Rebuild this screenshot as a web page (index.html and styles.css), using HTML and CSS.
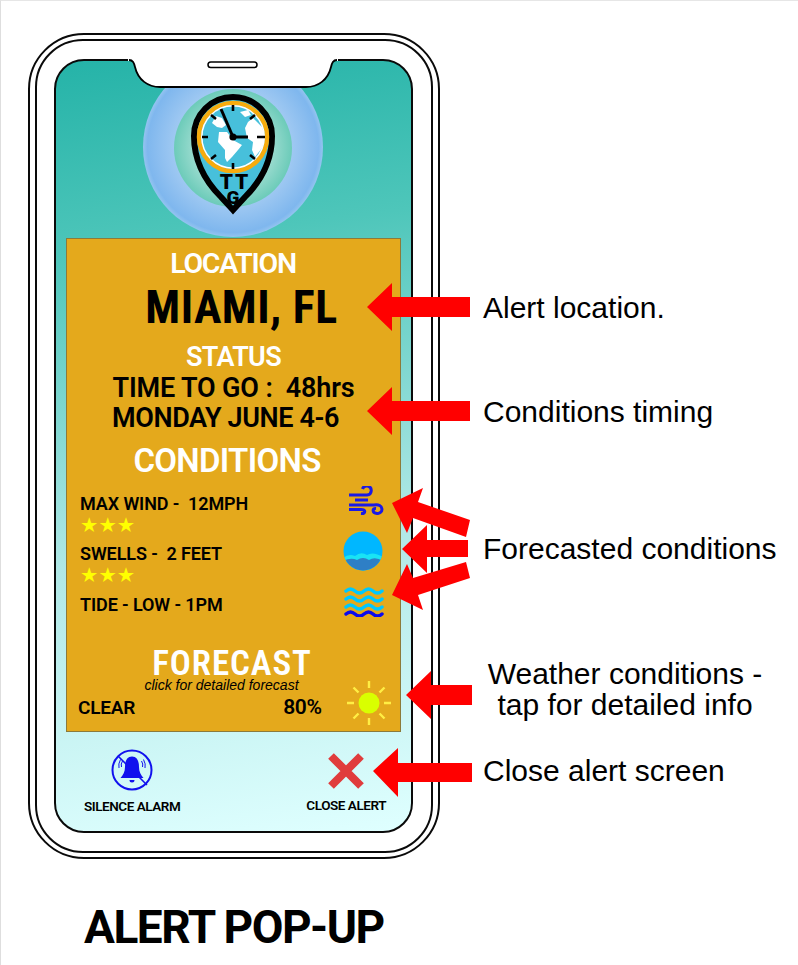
FILE: index.html
```html
<!DOCTYPE html>
<html lang="en">
<head>
<meta charset="utf-8">
<title>Alert pop-up</title>
<link rel="stylesheet" href="styles.css">
</head>
<body>
<main class="page">
  <div class="phone">
    <div class="phone-inner">
      <div class="screen">
        <svg class="logo" viewBox="143 57 180 180" width="180" height="180" aria-hidden="true">
          <defs>
            <radialGradient id="halo"><stop offset="0" stop-color="#e4eefa"/><stop offset="0.95" stop-color="#7fb7ee"/><stop offset="1" stop-color="#94c4f0"/></radialGradient>
            <radialGradient id="core"><stop offset="0" stop-color="#f4fbf9"/><stop offset="1" stop-color="#6ccbb9"/></radialGradient>
          </defs>
          <circle cx="233" cy="147" r="90" fill="url(#halo)"/>
          <circle cx="233" cy="148" r="59" fill="url(#core)"/>
          <path d="M233,210 L221,197 C206,182 194,162 194,136 A39,39 0 0 1 272,136 C272,162 260,182 245,197 Z" fill="#47c0db" stroke="#000" stroke-width="6"/>
          <circle cx="233" cy="137" r="34" fill="#47c0db" stroke="#f7ab0d" stroke-width="4.500"/>
          <circle cx="233" cy="137" r="31.200" fill="none" stroke="#fff" stroke-width="1.500"/>
          <g fill="#fff">
            <path d="M219,132 L227,132 L233,140 L242,145 L238,150 L232,157 L227,162 L225,158 L225,150 L218,142 Z"/>
            <path d="M212,123 L217,127 L222,128 L226,125 L222,118 L216,116 Z"/>
            <path d="M245,128 L248,122 L253,118 L262,127 L265,137 L262,148 L255,157 L252,150 L253,142 L247,138 Z"/>
            <path d="M240,112 L248,110 L251,115 L245,117 Z"/>
          </g>
          <path d="M233,105 V111 M233,163 V169 M202,137 H208 M257,137 H265 M211,115 L216,119 M255,115 L250,119 M211,159 L216,155 M255,159 L250,155" stroke="#000" stroke-width="2.600" fill="none"/>
          <path d="M233,137 L221,109" stroke="#000" stroke-width="3"/>
          <path d="M233,137 H248" stroke="#000" stroke-width="3"/>
          <circle cx="233" cy="137" r="3.600"/>
          <text class="logo-tt" x="235" y="188.500" text-anchor="middle">TT</text>
          <text class="logo-g" x="233" y="203.500" text-anchor="middle">G</text>
        </svg>

        <section class="card">
          <h2 class="label label-location">LOCATION</h2>
          <p class="city">MIAMI, FL</p>
          <h2 class="label label-status">STATUS</h2>
          <p class="timing timing-a">TIME TO GO :&nbsp; 48hrs</p>
          <p class="timing timing-b">MONDAY JUNE 4-6</p>
          <h2 class="label label-conditions">CONDITIONS</h2>

          <div class="cond cond-wind">
            <div>
              <div class="cond-text">MAX WIND -&nbsp; 12MPH</div>
              <div class="stars">★★★</div>
            </div>
            <svg class="icon-wind" viewBox="0 0 37 29" width="37" height="29" aria-hidden="true">
              <g fill="none" stroke="#1a1ae6" stroke-width="3">
                <path d="M2,9 H20 A4.500,4.500 0 1 0 15.500,3"/>
                <path d="M8,14 H21"/>
                <path d="M2,19 H27 C37,17 37,28 30,27.500 C25,27 25,22 29,22.500"/>
                <path d="M2,23.500 H14 C19,23.500 19,28 14,27.500"/>
              </g>
            </svg>
          </div>
          <div class="cond cond-swell">
            <div>
              <div class="cond-text">SWELLS -&nbsp; 2 FEET</div>
              <div class="stars">★★★</div>
            </div>
            <svg class="icon-ball" viewBox="0 0 40 40" width="40" height="40" aria-hidden="true">
              <clipPath id="ball"><circle cx="20" cy="20" r="19.500"/></clipPath>
              <g clip-path="url(#ball)">
                <rect width="40" height="40" fill="#00b7ff"/>
                <path d="M0,27 Q6,22 12,25 Q18,20 24,24 Q30,20 40,26 V40 H0 Z" fill="#19e3f5"/>
                <path d="M0,30 Q8,26 14,29 Q20,25 26,29 Q32,25 40,30 V40 H0 Z" fill="#2e7fc6"/>
              </g>
            </svg>
          </div>
          <div class="cond cond-tide">
            <div class="cond-text">TIDE - LOW - 1PM</div>
            <svg class="icon-waves" viewBox="0 0 40 30" width="40" height="30" aria-hidden="true">
              <g fill="none" stroke-width="3.400" stroke-linecap="round">
                <path stroke="#00c8ff" d="M2,4 q4.500,-4 9,0 t9,0 t9,0 t9,0"/>
                <path stroke="#00c8ff" d="M2,12 q4.500,-4 9,0 t9,0 t9,0 t9,0"/>
                <path stroke="#00c8ff" d="M2,20 q4.500,-4 9,0 t9,0 t9,0 t9,0"/>
                <path stroke="#0a0aee" d="M2,27 q4.500,-4 9,0 t9,0 t9,0 t9,0"/>
              </g>
            </svg>
          </div>

          <h2 class="label label-forecast">FORECAST</h2>
          <p class="hint">click for detailed forecast</p>
          <div class="summary">
            <span class="summary-text">CLEAR</span>
            <span class="summary-pct">80%</span>
            <svg class="icon-sun" viewBox="0 0 46 46" width="46" height="46" aria-hidden="true">
              <circle cx="23" cy="23" r="10.500" fill="#d9ff00"/>
              <path d="M23,1 V8 M23,38 V45 M1,23 H8 M38,23 H45 M7.500,7.500 L12.500,12.500 M38.500,7.500 L33.500,12.500 M7.500,38.500 L12.500,33.500 M38.500,38.500 L33.500,33.500" stroke="#ffee44" stroke-width="2.400"/>
            </svg>
          </div>
        </section>

        <div class="actions">
          <div class="action action-silence">
            <svg viewBox="0 0 42 42" width="42" height="42" aria-hidden="true">
              <circle cx="21" cy="21" r="19.500" fill="none" stroke="#1111ee" stroke-width="2"/>
              <path d="M21,7.500 C16,7.500 14,12 14,18 C14,23 12,26 9.500,29 H32.500 C30,26 28,23 28,18 C28,12 26,7.500 21,7.500 Z M18.500,31 A2.500,2.500 0 0 0 23.500,31 Z" fill="#1111ee"/>
              <path d="M7,7 L36,36" stroke="#1111ee" stroke-width="1.500"/>
              <path d="M10.500,18 Q9.500,15 11.500,12 M8,19 Q7,15 9.500,10.500 M31.500,18 Q32.500,15 30.500,12 M34,19 Q35,15 32.500,10.500" fill="none" stroke="#1111ee" stroke-width="1"/>
            </svg>
            <span class="action-label">SILENCE ALARM</span>
          </div>
          <div class="action action-close">
            <svg viewBox="0 0 38 38" width="38" height="38" aria-hidden="true">
              <path d="M4,4 L34,34 M34,4 L4,34" stroke="#e03c3c" stroke-width="8"/>
            </svg>
            <span class="action-label">CLOSE ALERT</span>
          </div>
        </div>
      </div>
    </div>
  </div>

  <h1 class="title">ALERT POP-UP</h1>

  <svg class="overlay" viewBox="0 0 798 965" width="798" height="965" aria-hidden="true">
    <path d="M128,58 H338 V61 H128 Z" fill="#fff"/>
    <path d="M129,60 C133,60 134,63 135,67 C138,80 148,87 160,87 L306,87 C318,87 328,80 331,67 C332,63 333,60 337,60" fill="#fff" stroke="#000" stroke-width="1.800"/>
    <rect x="208" y="62" width="49" height="5.500" rx="2.750" fill="#fff" stroke="#000" stroke-width="1.500"/>
    <g fill="#f00">
      <path d="M367,307 L392,283 V297 H470 V317 H392 V331 Z"/>
      <path d="M367,411 L392,387 V401 H470 V421 H392 V435 Z"/>
      <path d="M392,503 L423,488 L418,502 L470,520 L466,537 L413,518 L407,533 Z"/>
      <path d="M402,549 L427,525 V540 H468 V557 H427 V573 Z"/>
      <path d="M392,595 L407,564 L413,578 L466,562 L470,578 L418,595 L423,610 Z"/>
      <path d="M406,695 L431,671 V685 H472 V705 H431 V719 Z"/>
      <path d="M373,771 L398,748 V763 H472 V782 H398 V797 Z"/>
    </g>
  </svg>

  <p class="note note-location">Alert location.</p>
  <p class="note note-timing">Conditions timing</p>
  <p class="note note-forecasted">Forecasted conditions</p>
  <p class="note note-weather">Weather conditions -<br>tap for detailed info</p>
  <p class="note note-close">Close alert screen</p>
</main>
</body>
</html>
```

FILE: styles.css
```css
* { box-sizing: border-box; }
html, body { margin: 0; padding: 0; background: #fff; }
p, h1, h2 { margin: 0; font-weight: inherit; font-size: inherit; }

.page {
  position: relative;
  width: 798px;
  height: 965px;
  overflow: hidden;
  padding: 33px 0 0 28px;
  border-left: 1px solid #dedede;
  border-top: 1px solid #e6e6e6;
  font-family: Roboto, "Liberation Sans", sans-serif;
  color: #000;
}

.phone {
  width: 412px;
  height: 826px;
  margin-left: -1px;
  margin-top: -1px;
  padding: 4px 5px;
  border: 2px solid #0a0a0a;
  border-radius: 56px;
}
.phone-inner {
  height: 100%;
  padding: 18px 18px 18px 17px;
  border: 2px solid #0a0a0a;
  border-radius: 48px;
}
.screen {
  display: flex;
  flex-direction: column;
  height: 100%;
  overflow: hidden;
  padding: 0 10px;
  border: 2px solid #0a0a0a;
  border-radius: 30px;
  background: linear-gradient(172deg, #25b3a8 0%, #4ec6ba 24%, #b0e8e6 62%, #dfffff 100%);
}
.logo { display: block; flex: none; margin: -4px auto 0 77px; }

.card {
  flex: none;
  width: 335px;
  height: 494px;
  margin-top: 1px;
  padding: 0 12px;
  border: 1px solid #8c7a3a;
  background: #e4a91c;
}
.label { color: #fff; font-weight: 600; text-align: center; }
.label-location { margin: 7px 0 0 -1px; font-size: 28.500px; letter-spacing: -1.250px; line-height: 36px; }
.city { margin: -1px 0 0 16px; font-size: 46px; font-weight: 700; font-stretch: 85%; letter-spacing: 0.450px; line-height: 52px; text-align: center; }
.label-status { margin: 8px 0 0; font-size: 27px; letter-spacing: -0.650px; line-height: 32px; }
.timing { font-size: 27px; font-weight: 600; line-height: 30px; text-align: center; }
.timing-a { margin-left: 0; letter-spacing: -0.150px; }
.timing-b { margin-left: -16px; letter-spacing: -0.400px; }
.label-conditions { margin: 7px 0 0 -13px; font-size: 33px; letter-spacing: -0.700px; line-height: 42px; }

.cond { display: flex; justify-content: space-between; align-items: flex-start; padding-left: 1px; }
.cond-text { font-size: 18px; font-weight: 600; letter-spacing: -0.100px; line-height: 22px; }
.stars { font-family: "DejaVu Sans", sans-serif; font-size: 20.500px; line-height: 20px; color: #ffff00; }
.cond-wind { height: 50px; margin-top: 11px; }
.cond-swell { height: 51px; }
.cond-tide { height: 36px; }
.icon-wind { margin: -7px 4px 0 0; }
.icon-ball { margin: -12px 5px 0 0; }
.icon-waves { margin: -7px 4px 0 0; }

.label-forecast { margin: 12px 0 0 -3px; font-size: 35px; font-stretch: 85%; letter-spacing: 0.900px; line-height: 44px; }
.hint { margin: -8px 0 0 -24px; font-family: "Liberation Sans", sans-serif; font-size: 14px; font-style: italic; line-height: 14px; text-align: center; }
.summary { position: relative; display: flex; align-items: center; height: 24px; margin: 3px 0 0 -1px; gap: 148px; }
.summary-text { font-size: 19px; font-weight: 600; letter-spacing: -0.200px; }
.summary-pct { font-size: 21px; font-weight: 600; letter-spacing: -0.300px; }
.icon-sun { position: absolute; top: -15px; right: -4px; }

.actions { display: flex; justify-content: space-between; align-items: flex-start; flex: 1; padding: 17px 15px 0 18px; }
.action { display: flex; flex-direction: column; align-items: center; }
.action-close { margin-top: 3px; }
.action-label { font-size: 13.500px; font-weight: 600; letter-spacing: -0.450px; line-height: 16px; white-space: nowrap; }
.action-silence .action-label { margin-top: 7px; }
.action-close .action-label { margin-top: 7px; }

.title { margin: 43px 0 0 55px; font-size: 46px; font-weight: 700; letter-spacing: -1.500px; line-height: 50px; }

.overlay { position: absolute; left: -1px; top: -1px; pointer-events: none; }

.note { position: absolute; font-family: "Liberation Sans", sans-serif; font-size: 30px; line-height: 31px; white-space: nowrap; color: #000; }
.note-location { left: 482px; top: 291px; }
.note-timing { left: 482px; top: 395px; }
.note-forecasted { left: 482px; top: 532px; }
.note-weather { left: 482px; top: 657px; width: 284px; text-align: center; }
.note-close { left: 482px; top: 754px; }

.logo-tt { font-family: Roboto, sans-serif; font-size: 21px; font-weight: 900; letter-spacing: 2px; }
.logo-g { font-family: Roboto, sans-serif; font-size: 19px; font-weight: 900; }
```
